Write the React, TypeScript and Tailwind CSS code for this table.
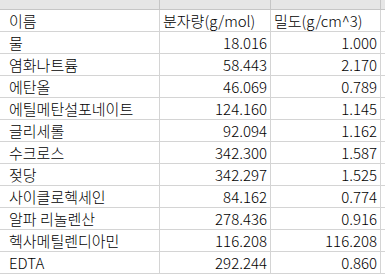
const rows: [string, string, string][] = [
  ["물", "18.016", "1.000"],
  ["염화나트륨", "58.443", "2.170"],
  ["에탄올", "46.069", "0.789"],
  ["에틸메탄설포네이트", "124.160", "1.145"],
  ["글리세롤", "92.094", "1.162"],
  ["수크로스", "342.300", "1.587"],
  ["젖당", "342.297", "1.525"],
  ["사이클로헥세인", "84.162", "0.774"],
  ["알파 리놀렌산", "278.436", "0.916"],
  ["헥사메틸렌디아민", "116.208", "116.208"],
  ["EDTA", "292.244", "0.860"],
];

const Row = ({ cells, header }: { cells: [string, string, string]; header?: boolean }) => (
  <div className="flex h-[22px] border-b border-[#d4d4d4]">
    <div className="w-[160px] shrink-0 border-r border-[#d4d4d4] pl-[9px] flex items-center">
      {cells[0]}
    </div>
    <div
      className={
        "w-[111px] shrink-0 border-r border-[#d4d4d4] flex items-center " +
        (header ? "pl-[3px]" : "justify-end pr-[3px]")
      }
    >
      {cells[1]}
    </div>
    <div
      className={
        "w-[110px] shrink-0 border-r border-[#d4d4d4] flex items-center " +
        (header ? "pl-[3px]" : "justify-end pr-[3px]")
      }
    >
      {cells[2]}
    </div>
    <div className="flex-1" />
  </div>
);

export default function App() {
  return (
    <div
      className="w-[385px] h-[278px] overflow-hidden bg-white text-black text-[15px] leading-none font-light"
      style={{ fontFamily: '"Noto Sans CJK KR", "Noto Sans", sans-serif' }}
    >
      <div className="flex h-[10px] bg-[#e6e6e6] border-b border-[#c6c6c6]">
        <div className="w-[160px] shrink-0 border-r border-[#c6c6c6]" />
        <div className="w-[111px] shrink-0 border-r border-[#c6c6c6]" />
        <div className="w-[110px] shrink-0 border-r border-[#c6c6c6]" />
        <div className="flex-1" />
      </div>
      <Row cells={["이름", "분자량(g/mol)", "밀도(g/cm^3)"]} header />
      {rows.map((r, i) => (
        <Row key={i} cells={r} />
      ))}
    </div>
  );
}
